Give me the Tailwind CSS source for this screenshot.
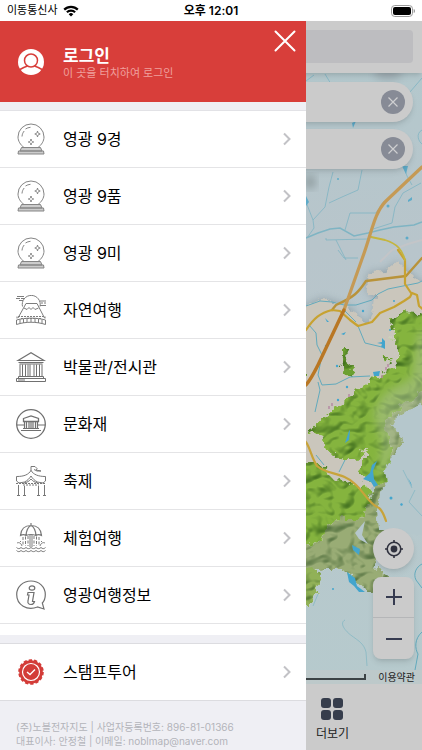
<!DOCTYPE html>
<html lang="ko">
<head>
    <meta charset="UTF-8">
    <meta name="viewport" content="width=device-width, initial-scale=1.0">
    <title>영광 여행지도</title>
    <script src="https://cdn.jsdelivr.net/npm/@tailwindcss/browser@4"></script>
</head>
<body class="h-screen flex flex-col overflow-hidden bg-white text-black font-['Inter','Noto_Sans_CJK_KR',sans-serif]">
    <!-- shared icons -->
    <svg class="hidden">
        <symbol id="crystal" viewBox="0 0 30 32">
            <g fill="none" stroke="#858585" stroke-width="1">
                <path d="M8 24.500C4.500 22 2 18 2 14a13 13 0 0 1 26 0c0 4-2.500 8-6 10.500"/>
                <path d="M6 13.500c.2-2.500 1-4 2.200-5.500M9.500 6c1.500-1 3-1.500 5-1.700"/>
                <path d="M21.500 8c.3 2 .8 2.600 2.700 3-1.900.4-2.400 1-2.700 3-.3-2-.8-2.600-2.700-3 1.900-.4 2.400-1 2.700-3zM15 16c.3 2 .8 2.600 2.700 3-1.900.4-2.400 1-2.700 3-.3-2-.8-2.600-2.700-3 1.900-.4 2.400-1 2.700-3z"/>
                <path d="M5.500 24.500h19l1.500 3.500H4zM2.500 28h25l.5 3H2z" fill="#ccc"/>
            </g>
        </symbol>
        <symbol id="chevron" viewBox="0 0 8 14">
            <path d="M1 1.500L6.500 7 1 12.500" fill="none" stroke="#c2c2c6" stroke-width="2"/>
        </symbol>
        <symbol id="clear" viewBox="0 0 24 24">
            <circle cx="12" cy="12" r="12" fill="#878b96"/>
            <path d="M7.500 7.500l9 9m0-9l-9 9" stroke="#cfcfd1" stroke-width="1.200"/>
        </symbol>
    </svg>

    <!-- status bar -->
    <header class="h-[21px] shrink-0 grid grid-cols-3 items-center pl-[7px] pr-[7px] text-xs">
        <div class="flex items-center gap-[5px]">
            <span class="text-[11px]">이동통신사</span>
            <svg class="w-4 h-3" viewBox="0 0 16 12" fill="none" stroke="#000" stroke-width="2.200">
                <path d="M1.200 4.600a9.600 9.600 0 0 1 13.600 0M3.900 7.300a5.800 5.800 0 0 1 8.200 0"/>
                <path d="M8 11.500L5.700 9.200a3.300 3.300 0 0 1 4.600 0z" fill="#000" stroke="none"/>
            </svg>
        </div>
        <span class="text-center font-semibold">오후 12:01</span>
        <svg class="w-6 h-3 justify-self-end" viewBox="0 0 24 12">
            <rect x=".5" y=".5" width="21" height="11" rx="3.300" fill="none" stroke="#9b9b9b"/>
            <rect x="2" y="2" width="18" height="8" rx="2"/>
            <path d="M22.700 4v4c1-.4 1.300-1 1.300-2s-.3-1.600-1.300-2z" fill="#9b9b9b"/>
        </svg>
    </header>

    <main class="relative flex-1 min-h-0 flex flex-col">
        <div class="relative z-10 h-[52px] shrink-0 px-[9px] pt-[9px] bg-[#cbcbcb] shadow-md">
            <input type="search" aria-label="검색" class="block w-full h-[33px] rounded bg-[#bdbdc0] outline-none">
        </div>

        <!-- map -->
        <section class="relative flex-1 min-h-0 overflow-hidden bg-[#b8c8cc]">
            <svg class="absolute inset-0 w-full h-full" viewBox="0 73 422 611" preserveAspectRatio="xMaxYMin slice">
                <defs>
                    <filter id="rough" x="-5%" y="-5%" width="110%" height="110%" color-interpolation-filters="sRGB">
                        <feTurbulence type="fractalNoise" baseFrequency=".13" numOctaves="3" seed="4" result="n"/>
                        <feDisplacementMap in="SourceGraphic" in2="n" scale="9" xChannelSelector="R" yChannelSelector="G"/>
                    </filter>
                    <filter id="relief" x="-5%" y="-5%" width="110%" height="110%" color-interpolation-filters="sRGB">
                        <feTurbulence type="fractalNoise" baseFrequency=".13" numOctaves="3" seed="4" result="n"/>
                        <feDisplacementMap in="SourceGraphic" in2="n" scale="13" xChannelSelector="R" yChannelSelector="G" result="shape"/>
                        <feTurbulence type="turbulence" baseFrequency=".045 .06" numOctaves="2" seed="11" result="hills"/>
                        <feGaussianBlur in="hills" stdDeviation=".8" result="hills2"/>
                        <feDiffuseLighting in="hills2" surfaceScale="7" diffuseConstant="1.150" lighting-color="#fff" result="light">
                            <feDistantLight azimuth="225" elevation="62"/>
                        </feDiffuseLighting>
                        <!-- keep the shadows from going below mid tone -->
                        <feComponentTransfer in="light" result="gentle">
                            <feFuncR type="linear" slope=".6" intercept=".38"/>
                            <feFuncG type="linear" slope=".45" intercept=".53"/>
                            <feFuncB type="linear" slope=".6" intercept=".38"/>
                        </feComponentTransfer>
                        <feBlend in="gentle" in2="shape" mode="multiply" result="lit"/>
                        <feComposite in="lit" in2="shape" operator="in"/>
                    </filter>
                    <filter id="soft" x="-20%" y="-20%" width="140%" height="140%"><feGaussianBlur stdDeviation="4"/></filter>
                    <linearGradient id="sea" x1="0" y1="0" x2="0" y2="1">
                        <stop offset="0" stop-color="#b2c9cd"/>
                        <stop offset=".35" stop-color="#b8c5cb"/>
                        <stop offset="1" stop-color="#b6cacd"/>
                    </linearGradient>
                    <path id="land" d="M290 310L306 306l12-6 7-2 7 3 13 4 7 4 5 8 10 6 5-3 3-14 1-10-8-3-2-13 4-8 15-1 8-6 4-3 8 8 8 6 7 6 12 3V404l-12 3-12 3-11 8-6 8 2 14-14 30-10 20-40 10-40-10z"/>
                </defs>
                <rect width="422" height="700" fill="url(#sea)"/>

                <!-- rivers over the northern plain -->
                <g fill="none" stroke="#7fb4c3" stroke-width=".8">
                    <path d="M306 238l12-5 12-4 10-1 14 8 14-3 12-3 14-3 20-2 8-3" stroke-width="1.500"/>
                    <path d="M306 202l7 18 1 8-7 10M313 220l12-13 4-20 4-15M329 203l13-6 16-7 4-20"/>
                    <path d="M345 230l5-17 26 0 8-12M370 230l22-7 3-16 8-14 18-10M326 238l0 2 42-1M422 130c-7 4-3 12 0 14M404 168l3 8 5 9"/>
                    <path d="M336 240l10 20M314 75l-8 6M325 74l6 10M410 92l12-14M338 250l6 8h14"/>
                </g>
                <g fill="#5eabc9">
                    <path d="M402 166l6 0-2 8zM408 200l4-3 0 3-4 2zM352 123l4-2-3 7zM306 196l3 6-3 4z"/>
                    <circle cx="407" cy="238" r="1.500"/><circle cx="338" cy="179" r="1"/><circle cx="388" cy="206" r="1.500"/>
                </g>
                <path d="M380 262l12-12 16-6 14-4" stroke="#c3c5c8" stroke-width="2" fill="none"/>
                <ellipse cx="310" cy="182" rx="6" ry="7" fill="#909da0" filter="url(#soft)"/>
                <ellipse cx="388" cy="74" rx="14" ry="6" fill="#9caab0" filter="url(#soft)"/>

                <!-- county -->
                <use href="#land" fill="#8798a0" opacity=".8" filter="url(#soft)"/>
                <use href="#land" fill="#cac6bc" filter="url(#rough)"/>
                <path d="M303 430h80l-20 60-28 8-32-10z" fill="#cac6bc"/>

                <!-- neighbouring ranges -->
                <g filter="url(#relief)">
                    <path fill="#9db078" d="M440 322l-25 6-8 44-30 20-14 20 8 30 8 30-8 26-10 14-34 4-10 18-18 4v24l8 6 14 4 20-4 14 12 10 12 18 6 6-12-4-12-10-6 2-14 14 3 3-16 2-26 8-16 0-14 8-14 8-10-2-10 8-14 12-14 22-6z"/>
                    <path fill="#94b559" d="M296 568l14-2 10 10-2 14-10 14-12 2z"/>
                    <path fill="#94b559" d="M414 415l14-4v22l-12-2z"/>
                </g>
                <!-- hills of the county -->
                <g filter="url(#relief)">
                    <path fill="#88b840" d="M440 314l-35-3-8 4-7 5 3 15-1 10 6 8-3 10-7 8-15 7-12 10-14 9-14 12-14 12-11 12 14 4 6 14 15 8 12 0 14-10-6 14-4 8 6 9 12 4 10-2 5-16-2-22-6-18 12-16 20-12 14-18 6-34z"/>
                    <path fill="#88b840" d="M300 464l20 0 14 15 18 4 12 4 10 2-6 16-8 14-24 0-10 16-14 10-12-6z"/>
                    <path fill="#6fa432" d="M341 352l6-2-1 12 8 6-2 8-9-4-3-8zM384 357l6 0 2 4-6 2zM302 370l6 0 0 5-6 0z"/>
                </g>
                <path fill="#b3c3a0" opacity=".45" filter="url(#soft)" d="M428 330l-10 4-6 44-28 16-10 18 8 34-4 30 8-4 8-24 6-30 28-16z"/>

                <!-- inlets -->
                <path d="M440 404l-18 2-14 3-13 9-3 8 7 9 4 4-3 9-9 10-6 14 2 10-7 12-3 16 2 20 60 6z" fill="#b5c7cc" filter="url(#rough)"/>
                <path d="M365 521l-3 14 6 9-9-5-4-6z" fill="#b5c7cc"/>

                <!-- lakes and streams -->
                <g fill="#43a5cd">
                    <path d="M382 338l3 3 0 8-4-2 1-3-5-1 5-1zM373 372l7-1-1 5-5 0zM345 443l4-12 1-1-1 10zM377 461l-4 10 1 8 4 6-4 2-3-5-8-3 7-6 2-8zM347 572l8 6 2 8 8 6-6 0-5-6-5-4zM352 545l8 4-1 6-6-5zM400 504l2-1 1 2-2 1zM408 478l3 5 1 4z"/>
                    <circle cx="326" cy="346" r="1.200"/><circle cx="337" cy="366" r="1.200"/><circle cx="347" cy="387" r="1.200"/><circle cx="338" cy="400" r="1.200"/><circle cx="363" cy="311" r="1.200"/><circle cx="390" cy="330" r="1"/><circle cx="394" cy="301" r="1"/><circle cx="391" cy="498" r="1.500"/><circle cx="333" cy="589" r="1"/>
                    <path d="M325 318l4 4-2 0zM341 334l5-2-2 3z"/>
                </g>
                <g fill="none" stroke="#62aabd" stroke-width="1">
                    <path d="M306 306l14-5 12 1 12 3 12 0 16-5 6-6 10-5 10-2 20-4 4-2 12 1"/>
                    <path d="M309 325l7 8 1 12 5 10-4 20 4 10 14-1 14-7 20-1M318 382l2 8-5 22M358 326l7 17 17 4M344 310l12 12"/>
                    <path d="M422 564c-6 3-9 10-6 16l6 8M422 632c-8 7-7 17-4 22l-3 16"/>
                    <path d="M345 620c-6 3 0 11 7 16s12 8 14 16l1 14M402 648l-6 11M318 594l-5 12M415 490l-6 12 13 14M403 470l9 18" opacity=".45"/>
                    <path d="M316 455l8 10M345 460l-6 12"/>
                </g>

                <!-- roads -->
                <g fill="none" stroke-linejoin="round" stroke-linecap="round">
                    <path d="M332 310l4-5c18-8 22-12 30-24l40-5 16-18" stroke="#b99339" stroke-width="2.400"/>
                    <path d="M306 330c8-12 14-17 26-20l8 1 10 9 8 6 14-4 8-9 14-6 10-6 6-4 2-4 5 2 2 11 6 5 7 1M398 250l7 10 0 24 6 9" stroke="#c7a231" stroke-width="2.200"/>
                    <path d="M371 237l14 3c13 4 17 10 20 20" stroke="#c4b53e" stroke-width="1.800"/>
                    <path d="M422 167l-36 34c-12 12-14 31-24 58l-18 51" stroke="#c59a55" stroke-width="3.200"/>
                    <path d="M344 310l-26 55c-4 8-7 14-12 20" stroke="#b97724" stroke-width="3.400"/>
                    <path d="M300 436c10 6 10 20 17 30 10 9 26 6 38 18 10 9 14 20 24 24 4 3 6 10 7 13" stroke="#c8a33a" stroke-width="2.200"/>
                </g>
                <path d="M329 406v3m3-6v3m17-12v3m33-22v3m4-11v3m2-6v3" stroke="#b58ba2" stroke-width="1.500"/>
            </svg>

            <!-- chosen filters -->
            <div class="absolute inset-x-[9px] top-[9px] flex flex-col gap-[7px]">
                <div class="h-10 flex items-center justify-end pr-2 rounded-full bg-[#cbcbcb] shadow-md">
                    <button type="button" aria-label="지우기" class="w-6 h-6"><svg class="w-full h-full"><use href="#clear"/></svg></button>
                </div>
                <div class="h-10 flex items-center justify-end pr-2 rounded-full bg-[#cbcbcb] shadow-md">
                    <button type="button" aria-label="지우기" class="w-6 h-6"><svg class="w-full h-full"><use href="#clear"/></svg></button>
                </div>
            </div>

            <!-- map controls -->
            <div class="absolute right-2 bottom-[25px] w-[41px] flex flex-col gap-2">
                <button type="button" aria-label="현재 위치" class="h-[41px] grid place-items-center rounded-full bg-[#cbcbcb] shadow-md">
                    <svg class="w-5 h-5" viewBox="0 0 20 20" fill="none" stroke="#30323f" stroke-width="1.600">
                        <circle cx="10" cy="10" r="6.800"/>
                        <circle cx="10" cy="10" r="3.400" fill="#30323f" stroke="none"/>
                        <path d="M10 1v3m0 12v3M1 10h3m12 0h3"/>
                    </svg>
                </button>
                <div class="flex flex-col rounded-lg bg-[#cbcbcb] shadow-md divide-y divide-[#b5b6b8]">
                    <button type="button" aria-label="확대" class="h-[41px] grid place-items-center">
                        <svg class="w-4 h-4" viewBox="0 0 16 16" stroke="#363b50" stroke-width="2"><path d="M8 0v16M0 8h16"/></svg>
                    </button>
                    <button type="button" aria-label="축소" class="h-[41px] grid place-items-center">
                        <svg class="w-4 h-4" viewBox="0 0 16 16" stroke="#363b50" stroke-width="2"><path d="M0 8h16"/></svg>
                    </button>
                </div>
            </div>
            <div class="absolute inset-x-0 bottom-0 h-[14px] flex items-center justify-end gap-[12px] pr-[7px] bg-[#c3c7c8]/50">
                <span class="w-20 h-[6px] border-b-2 border-r-2 border-[#3c4244]"></span>
                <a href="#" class="text-[10px] leading-[14px] text-[#222]">이용약관</a>
            </div>
        </section>

        <nav class="h-[66px] shrink-0 flex justify-end pr-[73px] bg-[#cbcbcb]">
            <button type="button" class="flex flex-col items-center gap-1 pt-[14px] text-xs leading-5 text-[#222]">
                <svg class="w-[22px] h-[22px]" viewBox="0 0 22 22" fill="#363d4c">
                    <rect width="10" height="10" rx="3"/><rect x="12" width="10" height="10" rx="3"/>
                    <rect y="12" width="10" height="10" rx="3"/><rect x="12" y="12" width="10" height="10" rx="3"/>
                </svg>
                더보기
            </button>
        </nav>

        <!-- side menu -->
        <aside class="absolute z-20 inset-y-0 left-0 w-[306px] flex flex-col overflow-hidden bg-[#efeff4]">
            <div class="h-[81px] shrink-0 flex justify-between bg-[#d83e3a] text-white">
                <button type="button" class="flex items-center gap-[17px] pl-4 text-left">
                    <svg class="w-[30px] h-[30px]" viewBox="0 0 30 30">
                        <circle cx="15" cy="15" r="13" fill="#fff"/>
                        <g fill="none" stroke="#d83e3a" stroke-width="1.500">
                            <circle cx="15" cy="13.500" r="6.500"/>
                            <path d="M4 22.500c2-1.300 4-2.500 7.500-3.500M26 22.500c-2-1.300-4-2.500-7.500-3.500"/>
                        </g>
                    </svg>
                    <span class="flex flex-col pt-1">
                        <strong class="text-[17px] leading-[18px] font-bold">로그인</strong>
                        <span class="text-[11px] leading-4 text-[#efa09d]">이 곳을 터치하여 로그인</span>
                    </span>
                </button>
                <button type="button" aria-label="닫기" class="self-start pt-[9px] pr-[10px]">
                    <svg class="w-[22px] h-[22px]" viewBox="0 0 22 22" stroke="#fff" stroke-width="2" stroke-linecap="round"><path d="M1.500 1.500l19 19m0-19l-19 19"/></svg>
                </button>
            </div>

            <ul class="mt-2 shrink-0 border-t border-[#e2e2e6] bg-white pb-[11px] text-base">
                <li><a href="#" class="h-[57px] flex items-center gap-[17px] pl-4 pr-[15px] border-b border-[#e4e4e6]">
                    <svg class="w-[30px] h-[32px]"><use href="#crystal"/></svg>
                    <span class="flex-1">영광 9경</span>
                    <svg class="w-2 h-[14px]"><use href="#chevron"/></svg>
                </a></li>
                <li><a href="#" class="h-[57px] flex items-center gap-[17px] pl-4 pr-[15px] border-b border-[#e4e4e6]">
                    <svg class="w-[30px] h-[32px]"><use href="#crystal"/></svg>
                    <span class="flex-1">영광 9품</span>
                    <svg class="w-2 h-[14px]"><use href="#chevron"/></svg>
                </a></li>
                <li><a href="#" class="h-[57px] flex items-center gap-[17px] pl-4 pr-[15px] border-b border-[#e4e4e6]">
                    <svg class="w-[30px] h-[32px]"><use href="#crystal"/></svg>
                    <span class="flex-1">영광 9미</span>
                    <svg class="w-2 h-[14px]"><use href="#chevron"/></svg>
                </a></li>
                <li><a href="#" class="h-[57px] flex items-center gap-[17px] pl-4 pr-[15px] border-b border-[#e4e4e6]">
                    <svg class="w-[30px] h-[30px]" viewBox="0 0 30 30" fill="none" stroke="#7d7d7d">
                        <path d="M6.500 11a9 9 0 1 1 17.500 0" transform="translate(0 .5)"/>
                        <path d="M1 1.500h7M0 3.500h4m1 0h4M3 5.500h4M24 6h6M25 8h2m1 0h2M24 10.500h6"/>
                        <path d="M10 8.500h11l7.500 14.500M10 8.500L2 23M8 13l3 1.500 2-2 2 2 2-2 2 2 3.500-1.500"/>
                        <path d="M1 23.500V21.500h28v2M5 23.500h20" stroke-dasharray="2 1"/>
                        <path d="M.5 25c9-2.500 20-2.500 29 0v4.500c-9-3-20-3-29 0zM4 24.500v4M7.500 24v4M11 23.500v4M15 23v4M19 23.500v4M22.500 24v4M26 24.500v4"/>
                    </svg>
                    <span class="flex-1">자연여행</span>
                    <svg class="w-2 h-[14px]"><use href="#chevron"/></svg>
                </a></li>
                <li><a href="#" class="h-[57px] flex items-center gap-[17px] pl-4 pr-[15px] border-b border-[#e4e4e6]">
                    <svg class="w-[30px] h-[30px]" viewBox="0 0 30 30" fill="none" stroke="#707070">
                        <path d="M2 8.500L15 .8l13 7.700z" stroke-width="1.200"/>
                        <path d="M2.500 10.500h25M3.500 12h23"/>
                        <path d="M4 12.500v12M6.500 12.500v12M9.500 12.500v12M12 12.500v12M18 12.500v12M20.500 12.500v12M23.500 12.500v12M26 12.500v12M14 12.500v12"/>
                        <path d="M2.500 24.500h25v2h-25zM.5 26.500h29v3H.5zM2 28h7"/>
                    </svg>
                    <span class="flex-1">박물관/전시관</span>
                    <svg class="w-2 h-[14px]"><use href="#chevron"/></svg>
                </a></li>
                <li><a href="#" class="h-[57px] flex items-center gap-[17px] pl-4 pr-[15px] border-b border-[#e4e4e6]">
                    <svg class="w-[30px] h-[30px]" viewBox="0 0 30 30" fill="none" stroke="#707070">
                        <circle cx="15" cy="15" r="14.300" stroke-width="1.300"/>
                        <path d="M.5 16H8m14 0h7.500"/>
                        <path d="M7.500 9.500L15 7l7.500 2.500v3h-15z" stroke-width="1.300"/>
                        <path d="M8.500 13v6M10.500 13v6M13 13v6M15 13v6M17 13v6M19.500 13v6M21.500 13v6M7 19.500h16M5 21.500h20" stroke-width="1.200"/>
                    </svg>
                    <span class="flex-1">문화재</span>
                    <svg class="w-2 h-[14px]"><use href="#chevron"/></svg>
                </a></li>
                <li><a href="#" class="h-[57px] flex items-center gap-[17px] pl-4 pr-[15px] border-b border-[#e4e4e6]">
                    <svg class="w-[30px] h-[30px]" viewBox="0 0 30 30" fill="none" stroke="#787878">
                        <path d="M15 5V.5h4l2 2-1 1.500 5 1h-4l-3-1.500"/>
                        <path d="M.5 10.500c8 0 12-2 14.500-6 2.500 4 7 6 14.500 6V15L27 17l-5.500-1c-3-1.500-5-3.500-6.500-6-1.500 2.500-3.500 4.500-6.500 6L3 17 .5 15z"/>
                        <path d="M8 17c3-.5 5.500-2 7-4 1.500 2 4 3.500 7 4"/>
                        <path d="M0 17.500h30M7 19h16" stroke-dasharray="2 1"/>
                        <path d="M2.500 19v11M8.500 20v10M22.500 20v10M28.500 19v11M1 29.500h3m3 0h3m11 0h3m3 0h3"/>
                    </svg>
                    <span class="flex-1">축제</span>
                    <svg class="w-2 h-[14px]"><use href="#chevron"/></svg>
                </a></li>
                <li><a href="#" class="h-[57px] flex items-center gap-[17px] pl-4 pr-[15px] border-b border-[#e4e4e6]">
                    <svg class="w-[30px] h-[30px]" viewBox="0 0 30 30" fill="none" stroke="#7a7a7a">
                        <path d="M4.500 12.500C5 6 9 2.500 15 2.500s10 3.500 10.500 10c-2-1-4-1-5.500 0-3-1.200-7-1.200-10 0-1.500-1-3.500-1-5.500 0zM15 0v2.500M10 12.500c.3-4 2-8.500 5-10 3 1.500 4.700 6 5 10" stroke-width="1.200"/>
                        <path d="M14 12v12M16 12v12"/>
                        <path d="M7 14v9M9.500 13.500V23M12 13v10M18 13v10M20.500 13.500V23M23 14v9" stroke-dasharray="3 1.500"/>
                        <path d="M1 20c2-1 4 0 5 3M29 20c-2-1-4 0-5 3M4 18l1 1M26 18l-1 1"/>
                        <path d="M.5 24.500c1.500 1.500 3 1.500 4.500 0 1.500 1.500 3.500 1.500 5 0 1.500 1.500 3.500 1.500 5 0 1.500 1.500 3.500 1.500 5 0 1.500 1.500 3.500 1.500 5 0 1.500 1.500 3 1.500 4.500 0M.5 27.500c1.500 1.500 3 1.500 4.500 0 1.500 1.500 3.500 1.500 5 0 1.500 1.500 3.500 1.500 5 0 1.500 1.500 3.500 1.500 5 0 1.500 1.500 3.500 1.500 5 0 1.500 1.500 3 1.500 4.500 0"/>
                    </svg>
                    <span class="flex-1">체험여행</span>
                    <svg class="w-2 h-[14px]"><use href="#chevron"/></svg>
                </a></li>
                <li><a href="#" class="h-[57px] flex items-center gap-[17px] pl-4 pr-[15px] border-b border-[#e4e4e6]">
                    <svg class="w-[30px] h-[30px]" viewBox="0 0 30 30" fill="none" stroke="#707070" stroke-width="1.200">
                        <path d="M28 29l-6.500-2C11 31 .7 25 .7 14.500.7 7 7 1 15 1s14.300 6 14.300 13.500c0 3.500-1 6.500-3 8.500z"/>
                        <ellipse cx="16" cy="8" rx="2.800" ry="2.200"/>
                        <path d="M12 12.500h6l-1.500 9h2c-.5 2-1.500 3-3.500 3-2.500 0-3.500-1.500-3-3.500l1-6h-1.500z"/>
                    </svg>
                    <span class="flex-1">영광여행정보</span>
                    <svg class="w-2 h-[14px]"><use href="#chevron"/></svg>
                </a></li>
            </ul>

            <a href="#" class="mt-2 h-[58px] shrink-0 flex items-center gap-[17px] pl-4 pr-[15px] border-y border-[#dcdce0] bg-white text-base">
                <svg class="w-[30px] h-[30px]" viewBox="0 0 30 30">
                    <circle cx="15" cy="15" r="11.800" fill="#d33c38"/>
                    <circle cx="15" cy="15" r="11.500" fill="none" stroke="#d33c38" stroke-width="2.600" stroke-dasharray="3.200 1.967"/>
                    <circle cx="15" cy="15" r="8.500" fill="none" stroke="#fff" stroke-width="1.200"/>
                    <path d="M11 15l3 2.500 5-5" fill="none" stroke="#fff" stroke-width="1.400"/>
                </svg>
                <span class="flex-1">스탬프투어</span>
                <svg class="w-2 h-[14px]"><use href="#chevron"/></svg>
            </a>

            <footer class="pl-4 pt-[19px] text-[10px] leading-[14px] whitespace-nowrap text-[#b3b4ba]">
                <p>(주)노블전자지도 | 사업자등록번호: 896-81-01366</p>
                <p>대표이사: 안정철 | 이메일: noblmap@naver.com</p>
            </footer>
        </aside>
    </main>
</body>
</html>
